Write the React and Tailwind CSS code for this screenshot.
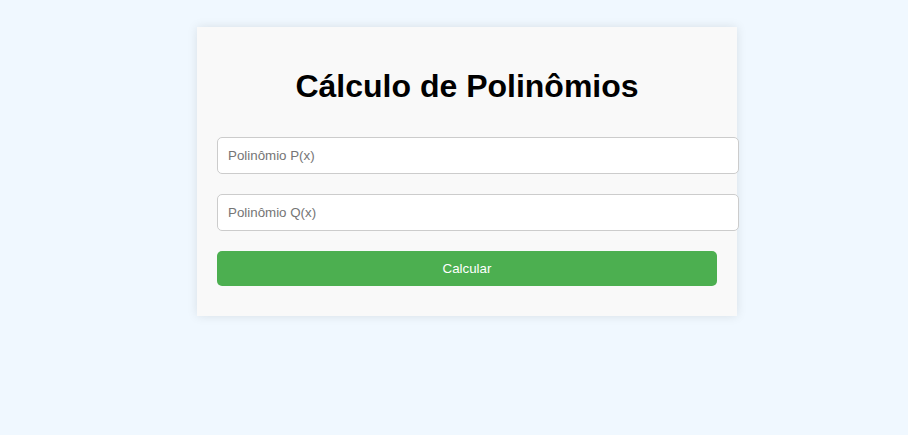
export default function App() {
  return (
    <div className="min-h-[435px] bg-[#f0f8ff] pt-[27px]" style={{ fontFamily: '"Liberation Sans", Arial, sans-serif' }}>
      <div className="flex w-[540px] flex-col bg-[#f9f9f9] px-5 pt-5 pb-[30px] shadow-[0_0_10px_rgba(0,0,0,0.1)]" style={{ marginLeft: 197 }}>
        <h1 className="mt-[21px] mb-[32px] text-center text-[32px] font-bold leading-[37px] text-black">
          Cálculo de Polinômios
        </h1>
        <input
          type="text"
          placeholder="Polinômio P(x)"
          className="h-[37px] w-[522px] shrink-0 rounded-[5px] border border-[#ccc] bg-white px-[10px] text-[13.33px] text-black outline-none placeholder:text-[#757575]"
        />
        <input
          type="text"
          placeholder="Polinômio Q(x)"
          className="mt-5 h-[37px] w-[522px] shrink-0 rounded-[5px] border border-[#ccc] bg-white px-[10px] text-[13.33px] text-black outline-none placeholder:text-[#757575]"
        />
        <button className="mt-5 h-[35px] w-[500px] rounded-[5px] bg-[#4caf50] text-[13.33px] text-white">
          Calcular
        </button>
      </div>
    </div>
  );
}
